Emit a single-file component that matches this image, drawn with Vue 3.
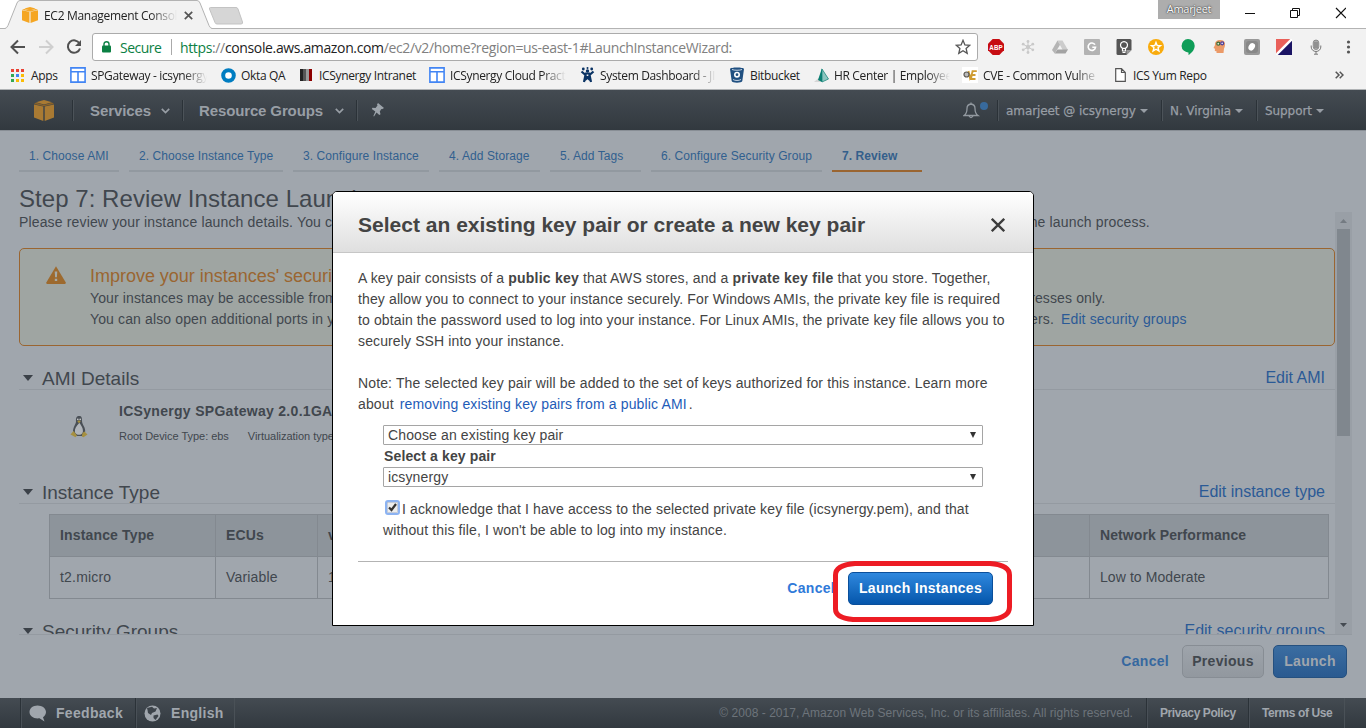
<script setup>
const bookmarks = [
  { icon: 'apps', label: 'Apps' },
  { icon: 'board', label: 'SPGateway - icsynergy', fade: true },
  { icon: 'okta', label: 'Okta QA' },
  { icon: 'bars', label: 'ICSynergy Intranet' },
  { icon: 'board', label: 'ICSynergy Cloud Practice', fade: true },
  { icon: 'jira', label: 'System Dashboard - JIRA', fade: true },
  { icon: 'bucket', label: 'Bitbucket' },
  { icon: 'hr', label: 'HR Center | Employee', fade: true },
  { icon: 'cve', label: 'CVE - Common Vulne', fade: true },
  { icon: 'page', label: 'ICS Yum Repo' },
]
const appColors = ['#ea4335', '#ea4335', '#ea4335', '#34a853', '#4285f4', '#fbbc05', '#34a853', '#fbbc05', '#fbbc05']
const steps = ['1. Choose AMI', '2. Choose Instance Type', '3. Configure Instance', '4. Add Storage', '5. Add Tags', '6. Configure Security Group', '7. Review']
const columns = ['Instance Type', 'ECUs', 'vCPUs', 'Memory (GiB)', 'Instance Storage (GB)', 'EBS-Optimized Available', 'Network Performance']
const values = ['t2.micro', 'Variable', '1', '1', 'EBS only', '-', 'Low to Moderate']
</script>

<template>
  <div class="screen">
    <div class="tabstrip">
      <svg class="tabshape" width="260" height="29" viewBox="0 0 260 29">
        <path d="M0 28.5H5Q7 28 8 25.5L17 3Q18 .5 20 .5H197Q199 .5 200 3L209 25.5Q210 28 212 28.5H260V29H0Z" fill="#f2f2f2" />
        <path d="M0 28.5H5Q7 28 8 25.5L17 3Q18 .5 20 .5H197Q199 .5 200 3L209 25.5Q210 28 212 28.5H260" fill="none" stroke="#b3b3b3" />
        <path d="M210.5 7.5H236Q237.500 7.500 238 9L242.500 22Q243 24 241 24H217Q215.500 24 215 22.500L209.500 9Q209 7.500 210.500 7.500Z" fill="#d6d6d6" stroke="#c3c3c3" />
      </svg>
      <div class="tab">
        <svg width="16" height="16" viewBox="0 0 20 20"><path fill="#f5a623" d="M10 0L17 2 10 4.300 3 2ZM0 4L9.300 6V20L0 16.500ZM20 4L10.700 6V20L20 16.500ZM3 2.500L0 3.500 10 5.500 20 3.500 17 2.500 10 4.500Z" /></svg>
        <span class="tabname fade">EC2 Management Console</span>
        <svg width="9" height="9" viewBox="0 0 9 9"><path d="M.8.8L8.200 8.200M8.200.8L.8 8.200" stroke="#555" stroke-width="1.700" /></svg>
      </div>
      <div class="window">
        <span class="user">Amarjeet</span>
        <svg width="105" height="28" viewBox="0 0 105 28" fill="none" stroke="#111" stroke-width="1">
          <path d="M4 13.500H14M49.500 10.500H56.500V17.500H49.500ZM51.500 10V8.500H58.500V15.500H57" /><path d="M95 8L105 18M105 8L95 18" stroke-width="1.200" />
        </svg>
      </div>
    </div>

    <div class="toolbar">
      <svg class="nav" width="92" height="34" viewBox="0 0 92 34" fill="none" stroke-width="2">
        <path d="M25 18H12M18 11.500L11.500 18L18 24.500" stroke="#505050" />
        <path d="M39 18H52M46 11.500L52.500 18L46 24.500" stroke="#cfcfcf" />
        <path d="M79.500 14.500A6.200 6.200 0 1 0 80 19.500" stroke="#505050" />
        <path d="M81 11V17H75Z" fill="#505050" />
      </svg>
      <div class="address">
        <svg class="lock" width="9" height="12" viewBox="0 0 9 12"><rect y="4.500" width="9" height="7" rx="1" fill="#0b8043" /><path d="M2 5V3a2.500 2.300 0 0 1 5 0V5" fill="none" stroke="#0b8043" stroke-width="1.400" /></svg>
        <span class="secure">Secure</span>
        <span class="sep"></span>
        <span class="url"><span class="scheme">https</span>://<span class="host">console.aws.amazon.com</span>/ec2/v2/home?region=us-east-1#LaunchInstanceWizard:</span>
        <svg width="16" height="16" viewBox="0 0 16 16"><path d="M8 1.300L9.900 5.900 14.800 6.300 11.100 9.500 12.200 14.300 8 11.700 3.800 14.300 4.900 9.500 1.200 6.300 6.100 5.900Z" fill="none" stroke="#555" stroke-width="1.300" /></svg>
      </div>
      <div class="exts">
        <svg viewBox="0 0 16 16"><path d="M4.700 0h6.600L16 4.700v6.600L11.300 16H4.700L0 11.300V4.700Z" fill="#c70d12" /><text x="1.300" y="10.900" font-size="7.500" font-weight="700" fill="#fff" font-family="Liberation Sans, sans-serif" textLength="13.400" lengthAdjust="spacingAndGlyphs">ABP</text></svg>
        <svg viewBox="0 0 16 16" stroke="#c9c9c9" stroke-width="1"><path d="M8 3V13M3.700 5.500L12.300 10.500M12.300 5.500L3.700 10.500" /><g fill="#c9c9c9" stroke="none"><circle cx="8" cy="8" r="2.200" /><circle cx="8" cy="2.500" r="1.400" /><circle cx="8" cy="13.500" r="1.400" /><circle cx="3.200" cy="5.200" r="1.400" /><circle cx="12.800" cy="5.200" r="1.400" /><circle cx="3.200" cy="10.800" r="1.400" /><circle cx="12.800" cy="10.800" r="1.400" /></g></svg>
        <svg viewBox="0 0 16 16"><path d="M5.500 1.500L0 11 2.700 14.500 8.200 5.500Z" fill="#b5b5b5" /><path d="M5.500 1.500H10.500L16 11H10.700Z" fill="#ccc" /><path d="M5.500 10.500H16L13.500 14.500H2.700Z" fill="#a3a3a3" /></svg>
        <svg viewBox="0 0 16 16"><rect width="16" height="16" rx="1" fill="#b3b3b3" /><path d="M11 5.700A3.700 3.700 0 1 0 11.500 8.300H8.300" fill="none" stroke="#fff" stroke-width="1.600" /></svg>
        <svg viewBox="0 0 16 16"><path d="M1 0H14Q15.500 0 15.500 1.500V11L10.500 16H2Q.5 16 .5 14.500V1Z" fill="#555" /><path d="M15.500 11H10.500V16Z" fill="#999" /><path d="M6.500 9.500V12H9.500V9.500M6.700 9.300A3.500 3.500 0 1 1 9.300 9.300ZM6.500 13.500H9.500" fill="none" stroke="#fff" stroke-width="1.200" /></svg>
        <svg viewBox="0 0 16 16"><circle cx="8" cy="8" r="8" fill="#f9ab0c" /><path d="M8 3.500L9.200 6.500 12.500 6.700 10 8.700 10.900 12 8 10.200 5.100 12 6 8.700 3.500 6.700 6.800 6.500Z" fill="#f9ab0c" stroke="#fff" stroke-width="1.400" /></svg>
        <svg viewBox="0 0 16 16"><path d="M8 0A6.700 6.700 0 0 1 14.700 6.700C14.700 11 11 14.500 8.500 16V13.400A6.700 6.700 0 1 1 8 0Z" fill="#0f9d58" /></svg>
        <svg viewBox="0 0 16 16"><path d="M4.500 14V12.300L2.800 12 3 9.800 1.500 9 3 6C2.500 2.500 5.500.8 8.500 1 13.500 1 14 6 12 9.500L11.500 14Z" fill="#eb9a68" /><circle cx="6.300" cy="4.700" r="1.500" fill="#dfe6d8" stroke="#3c6b35" stroke-width="1.200" /><circle cx="10.200" cy="4.300" r="1.500" fill="#d8d4ec" stroke="#4b3d98" stroke-width="1.200" /></svg>
        <svg viewBox="0 0 16 16"><rect width="16" height="16" rx="2" fill="#999" /><rect x="2" y="2" width="12" height="12" rx="3" fill="#888" /><ellipse cx="7.700" cy="8" rx="3" ry="4" fill="#fff" transform="rotate(30 8 8)" /></svg>
        <svg viewBox="0 0 16 16"><path d="M0 0H16L0 16Z" fill="#e9605a" /><path d="M16 0V16H0Z" fill="#1b1464" /><path d="M16 0L0 16" stroke="#fff" stroke-width="2.500" /></svg>
        <svg viewBox="0 0 16 16"><rect x="5.200" y="1" width="5.600" height="9.500" rx="2.800" fill="#aaa" stroke="#777" stroke-width=".7" /><path d="M3.200 6.500V8a4.800 4.500 0 0 0 9.600 0V6.500M8 12.500V15M6 15.200H10M6 4H10M6 6H10M6 8H10" fill="none" stroke="#777" /></svg>
        <svg viewBox="0 0 16 16" fill="#555"><circle cx="8.500" cy="3" r="1.600" /><circle cx="8.500" cy="8" r="1.600" /><circle cx="8.500" cy="13" r="1.600" /></svg>
      </div>
    </div>

    <div class="bookmarks">
      <div v-for="b in bookmarks" :key="b.label" class="bookmark">
        <svg v-if="b.icon === 'apps'" class="bi" width="13" height="13" viewBox="0 0 13 13"><rect v-for="(c, i) in appColors" :key="i" :x="(i % 3) * 5" :y="Math.floor(i / 3) * 5" width="3" height="3" :fill="c" /></svg>
        <svg v-else-if="b.icon === 'board'" class="bi" width="16" height="16" viewBox="0 0 16 16"><path d="M.9.900H15.100V15.100H.9ZM1 4.800H15M8 4.800V15" fill="#fff" stroke="#4285f4" stroke-width="1.600" /></svg>
        <svg v-else-if="b.icon === 'okta'" class="bi" width="15" height="15" viewBox="0 0 15 15"><circle cx="7.500" cy="7.500" r="5.300" fill="#fff" stroke="#007dc1" stroke-width="4" /></svg>
        <svg v-else-if="b.icon === 'bars'" class="bi" width="12" height="12" viewBox="0 0 12 12"><path d="M0 0H3V12H0Z" fill="#222" /><path d="M3 0H6V12H3Z" fill="#555" /><path d="M6 0H9V12H6Z" fill="#999" /><path d="M9 0H12V12H9Z" fill="#8c0000" /></svg>
        <svg v-else-if="b.icon === 'jira'" class="bi" width="15" height="16" viewBox="0 0 15 16"><path d="M1.500 4.500L5.500 8 4 15M13.500 4.500L9.500 8 11 15M5 6.500L10 6.500M5.500 9L10 13M9.500 9L5 13" fill="none" stroke="#0a3364" stroke-width="2.200" /><g fill="#0a3364"><circle cx="7.500" cy="4" r="1.700" /><circle cx="3.300" cy="2" r="1.400" /><circle cx="11.700" cy="2" r="1.400" /><circle cx="7.500" cy="1" r="1" /></g></svg>
        <svg v-else-if="b.icon === 'bucket'" class="bi" width="14" height="16" viewBox="0 0 14 16"><path d="M0 2C0 0 14 0 14 2L12.300 14C12 16.300 2 16.300 1.700 14Z" fill="#205081" /><path d="M2 2.500C4 3.500 10 3.500 12 2.500M3 12.500C5 13.800 9 13.800 11 12.500" fill="none" stroke="#c5d3e2" /><circle cx="7" cy="7.700" r="2.200" fill="#205081" stroke="#fff" stroke-width="1.600" /></svg>
        <svg v-else-if="b.icon === 'hr'" class="bi" width="15" height="15" viewBox="0 0 15 15"><path d="M0 14L7 8V14Z" fill="#d6d6d6" /><path d="M8 0V14L4 12Z" fill="#0a7f72" /><path d="M8 1L14.500 11 8 14Z" fill="#8cc6c0" stroke="#0a7f72" stroke-width=".7" /></svg>
        <svg v-else-if="b.icon === 'cve'" class="bi" width="16" height="16" viewBox="0 0 16 16"><rect width="16" height="16" fill="#fff" /><path d="M14.800 4.200H10.500L9 12H13.500M10 8H13.500M6.500 4L8 11 11 4" fill="none" stroke="#cf9c32" stroke-width="1.800" /><circle cx="4.500" cy="7.500" r="2.500" fill="#bbb" stroke="#5d5a54" stroke-width="1.200" /></svg>
        <svg v-else class="bi" width="11" height="14" viewBox="0 0 11 14"><path d="M.7.700H6.500L10.300 4.500V13.300H.7ZM6.500.7V4.500H10.300" fill="#fff" stroke="#555" stroke-width="1.200" /></svg>
        <span class="bl" :class="{ fade: b.fade }">{{ b.label }}</span>
      </div>
      <svg class="more" width="9" height="8" viewBox="0 0 9 8"><path d="M.7.700L4 4 .7 7.300M4.700.7L8 4 4.700 7.300" fill="none" stroke="#555" stroke-width="1.500" /></svg>
    </div>

    <header class="console">
      <svg class="logo" width="20" height="21" viewBox="0 0 20 21"><path fill="#a97a33" d="M10 0L18 2.300 10 4.600 2 2.300ZM0 4.500L9.300 6.600V21L0 17.500ZM20 4.500L10.700 6.600V21L20 17.500Z" /><path fill="#8a6228" d="M0 4.100L2 2.600 10 4.900 18 2.600 20 4.100 10 6.300Z" /></svg>
      <div class="menu services"><span>Services</span><svg width="9" height="6" viewBox="0 0 9 6"><path d="M.8.800L4.500 4.500 8.200.8" fill="none" stroke="#989ea5" stroke-width="1.700" /></svg></div>
      <div class="menu groups"><span>Resource Groups</span><svg width="9" height="6" viewBox="0 0 9 6"><path d="M.8.800L4.500 4.500 8.200.8" fill="none" stroke="#989ea5" stroke-width="1.700" /></svg></div>
      <div class="menu pin"><svg width="14" height="14" viewBox="0 0 14 14"><path d="M7 0L13 5 11 6.300 10.300 6 8.800 8.500 9.500 11.200 8.300 12 5.500 9.500 3 13.500 2.400 13 4.300 8.600.8 6 1.500 4.800 4.500 5 6.500 2.500 6 1.500Z" fill="#9da4ab" /></svg></div>
      <div class="right">
        <svg class="bell" width="26" height="21" viewBox="0 0 26 21"><path d="M1 15.500Q4 13.500 4 8.500Q4 4.500 8 4Q12 4.500 12 8.500Q12 13.500 15 15.500ZM8 4V2.500M6 16Q8 19 10 16" fill="none" stroke="#9299a0" stroke-width="1.300" /><circle cx="21" cy="6" r="4" fill="#386a9d" /></svg>
        <div class="drop d1"><span>amarjeet @ icsynergy</span><i></i></div>
        <div class="drop d2"><span>N. Virginia</span><i></i></div>
        <div class="drop d3"><span>Support</span><i></i></div>
      </div>
    </header>

    <main>
      <nav class="wizard"><span v-for="(s, i) in steps" :key="s" :class="{ active: i === 6 }">{{ s }}</span></nav>
      <h1>Step 7: Review Instance Launch</h1>
      <div class="scrollarea">
        <div class="content">
          <p class="intro">Please review your instance launch details. You can go back to edit changes for each section. Click Launch to assign a key pair to your instance and complete the launch process.</p>
          <div class="warning">
            <svg width="20" height="18" viewBox="0 0 20 18"><path d="M10 .3L19.800 16.500Q20 18 18.500 18H1.500Q0 18 .3 16.500Z" fill="#9d6a2f" /><path d="M8.700 5.500H11.300L10.900 11.200H9.100ZM8.800 12.700H11.200V15H8.800Z" fill="#a5aaa7" /></svg>
            <div>
              <h2>Improve your instances' security.</h2>
              <p class="w1">Your instances may be accessible from any IP address. We recommend that you update your security group rules to allow access from known IP addresses only.</p>
              <p class="w2"><span>You can also open additional ports in your security group to facilitate access to the application or service you're running, e.g., HTTP (80) for web servers.</span><a>Edit security groups</a></p>
            </div>
          </div>
          <div class="sec s1"><i></i><h3>AMI Details</h3><a>Edit AMI</a></div>
          <div class="ami">
            <svg width="18" height="22" viewBox="0 0 18 22"><path d="M9 0C6 0 5.800 2.500 6 5.500 6 8 3 11 3 15.500L5 20H13L15.200 15.500C15.500 11 12 8.500 12 5 12 2 12 0 9 0Z" fill="#4a5057" /><path d="M8.800 7.500C6.300 10 4.600 12.500 4.900 16 5.600 19.500 11.900 20 12.900 16 13.400 12 11 9.500 9.700 7Z" fill="#b1b5ba" /><path d="M7.300 5.200L9 4.300 10.700 5.200 9 7.200ZM.5 18.500L3.500 15 7 19.500 5.500 21.300ZM17.500 18.500L14.500 15.500 12.500 17 11.800 20.500 13.500 21.200Z" fill="#a69040" /><circle cx="7.800" cy="3.400" r=".8" fill="#ccc" /><circle cx="10.200" cy="3.400" r=".8" fill="#ccc" /></svg>
            <div><b>ICSynergy SPGateway 2.0.1GA</b><p><span>Root Device Type: ebs</span><span>Virtualization type: hvm</span></p></div>
          </div>
          <div class="sec"><i></i><h3>Instance Type</h3><a>Edit instance type</a></div>
          <div class="table">
            <div v-for="c in columns" :key="c" class="th">{{ c }}</div>
            <div v-for="(v, i) in values" :key="i" class="td">{{ v }}</div>
          </div>
          <div class="sec s3"><i></i><h3>Security Groups</h3><a>Edit security groups</a></div>
        </div>
        <div class="scrollbar">
          <svg width="17" height="17" viewBox="0 0 17 17"><path d="M5 11L8.500 7 12 11Z" fill="#747b82" /></svg>
          <div class="thumb"></div>
          <svg width="17" height="17" viewBox="0 0 17 17"><path d="M5 6L8.500 10 12 6Z" fill="#454b52" /></svg>
        </div>
      </div>
      <div class="actions"><a>Cancel</a><button class="prev">Previous</button><button class="launch">Launch</button></div>
    </main>

    <footer>
      <div class="fb"><svg width="18" height="17" viewBox="0 0 18 17"><path d="M8.500.5C13 .5 17 3.300 17 7 17 9.200 15.700 11 14 12.200L15.500 16.500 10.500 13.300C4.500 14 .5 11 .5 7 .5 3.300 4 .5 8.500.5Z" fill="#a0a6ad" /></svg><span>Feedback</span></div>
      <div class="fb en"><svg width="17" height="17" viewBox="0 0 17 17"><circle cx="8.500" cy="8.500" r="8" fill="#a0a6ad" /><path d="M3 3L8 1.800 10 3.500 13 3 11.500 6.500 8 8 7 10 4 8 3.500 5ZM9.500 10.500L13.500 9.500 14.500 11 11.500 15 9.500 13Z" fill="#3c434a" /></svg><span>English</span></div>
      <span class="copy">© 2008 - 2017, Amazon Web Services, Inc. or its affiliates. All rights reserved.</span>
      <b class="pp">Privacy Policy</b>
      <b class="tu">Terms of Use</b>
    </footer>

    <section class="dialog">
      <div class="dhead"><h2>Select an existing key pair or create a new key pair</h2><svg width="14" height="14" viewBox="0 0 14 14"><path d="M.8.800L13.200 13.200M13.200.8L.8 13.200" stroke="#3c3c3c" stroke-width="2.300" /></svg></div>
      <div class="dbody">
        <p>A key pair consists of a <b>public key</b> that AWS stores, and a <b>private key file</b> that you store. Together,<br>they allow you to connect to your instance securely. For Windows AMIs, the private key file is required<br>to obtain the password used to log into your instance. For Linux AMIs, the private key file allows you to<br>securely SSH into your instance.</p>
        <p class="note">Note: The selected key pair will be added to the set of keys authorized for this instance. Learn more<br>about <a>removing existing key pairs from a public AMI</a>.</p>
        <div class="form">
          <div class="select"><span>Choose an existing key pair</span><i></i></div>
          <label>Select a key pair</label>
          <div class="select"><span>icsynergy</span><i></i></div>
          <p class="ack"><svg width="15" height="15" viewBox="0 0 15 15"><rect x="1" y="1" width="13" height="13" rx="2" fill="#e8e8e8" stroke="#8cb3f2" stroke-width="2" /><rect x="2.500" y="2.500" width="10" height="10" fill="#ededed" stroke="#aab8cf" stroke-width=".6" /><path d="M4 7.500L6.500 10L11 4" fill="none" stroke="#333" stroke-width="2.200" /></svg>I acknowledge that I have access to the selected private key file (icsynergy.pem), and that<br>without this file, I won't be able to log into my instance.</p>
        </div>
        <div class="dfoot"><a>Cancel</a><button class="launch go">Launch Instances</button></div>
      </div>
      <svg class="mark" width="180" height="62" viewBox="0 0 180 62"><path d="M22 2.500H157Q176.500 4 176.500 14V46Q176.500 57 157 58.500H20Q2.500 57 2.500 48V14Q2.500 4 22 2.500Z" fill="none" stroke="#ed1c24" stroke-width="5" /></svg>
    </section>
  </div>
</template>

<style>
html, body { margin: 0; overflow: hidden; }
</style>
<style scoped>
* { box-sizing: border-box; }
h1, h2, h3, p { margin: 0; font-weight: 400; }
svg { flex: none; display: block; }
.screen { position: relative; width: 1366px; height: 728px; overflow: hidden; display: flex; flex-direction: column; background: #a0a6ad; font-family: "Liberation Sans", Arial, sans-serif; font-size: 14px; letter-spacing: .125px; color: #41474e; white-space: nowrap; }
.fade { overflow: hidden; -webkit-mask-image: linear-gradient(90deg, #000 80%, transparent); mask-image: linear-gradient(90deg, #000 80%, transparent); }

.tabstrip { position: relative; flex: none; height: 29px; background: #fff; border-bottom: 1px solid #b3b3b3; display: flex; justify-content: space-between; font-family: "Open Sans", sans-serif; font-size: 12px; letter-spacing: -.3px; color: #222; }
.tabshape { position: absolute; left: 0; top: 0; }
.tab { position: relative; display: flex; align-items: center; height: 28px; padding: 2px 0 0 22px; }
.tabname { width: 133px; margin: 0 7px 0 6px; }
.window { display: flex; padding-right: 20px; }
.user { width: 62px; height: 19px; margin-right: 21px; background: #adadad; color: #fff; text-shadow: 0 0 2px #333, 0 0 1px #333; font-size: 11px; line-height: 18px; text-align: center; }

.toolbar { flex: none; height: 34px; background: #f2f2f2; display: flex; }
.address { flex: none; width: 886px; height: 28px; margin-top: 4px; background: #fff; border: 1px solid #ababab; border-radius: 3px; display: flex; align-items: center; padding: 0 6px 0 9px; font-family: "Open Sans", sans-serif; font-size: 14px; letter-spacing: -.36px; color: #808080; }
.secure { color: #0b8043; margin-left: 9px; width: 42px; letter-spacing: -.5px; }
.sep { width: 1px; height: 16px; background: #aaa; margin: 0 8px 0 9px; }
.url { flex: 1; }
.scheme { color: #0b8043; }
.host { color: #222; }
.exts { display: grid; grid-template-columns: repeat(12, 32px); padding: 10px 0 0 10px; }
.exts svg { width: 16px; height: 16px; }

.bookmarks { flex: none; height: 27px; background: #f2f2f2; border-bottom: 1px solid #b0b3b5; display: grid; grid-template-columns: 59px 151px 79px 129px 151px 150px 84px 148px 153px 220px 9px; padding: 0 0 2px 11px; align-items: center; font-family: "Open Sans", sans-serif; font-size: 12px; letter-spacing: -.34px; color: #222; }
.bookmark { display: flex; align-items: center; }
.bl { width: 116px; margin-left: 5px; }
.bookmark:nth-child(1) .bl, .bookmark:nth-child(4) .bl, .bookmark:nth-child(10) .bl { margin-left: 7px; }
.bookmark:nth-child(7) .bl { margin-left: 6px; }

.console { flex: none; height: 41px; background: linear-gradient(#444b52, #32393f); border-bottom: 1px solid #888e95; display: flex; align-items: center; color: #989ea5; }
.logo { margin: 0 18px 0 34px; }
.menu { height: 21px; border-left: 1px solid #2b3238; box-shadow: inset 1px 0 #4c5359; display: flex; align-items: center; padding-left: 17px; font-weight: 700; font-size: 15px; letter-spacing: -.13px; }
.menu svg { margin-left: 10px; margin-top: 2px; }
.services { width: 110px; }
.services span { letter-spacing: -.1px; }
.groups { width: 174px; padding-left: 16px; }
.groups svg { margin-left: 12px; }
.pin { width: 40px; padding-left: 14px; }
.pin svg { margin: 0; }
.right { margin-left: auto; display: flex; align-items: center; font-family: "DejaVu Sans", sans-serif; font-size: 12px; letter-spacing: -.08px; }
.bell { margin-right: 8px; }
.drop { height: 21px; border-left: 1px solid #2b3238; box-shadow: inset 1px 0 #4c5359; display: flex; align-items: center; padding-left: 8px; -webkit-text-stroke: .25px #989ea5; }
.drop span { padding-top: 1px; }
.drop i { border: 4px solid transparent; border-top: 4px solid #989ea5; border-bottom: 0; margin: 2px 0 0 4px; }
.d1 { width: 164px; } .d2 { width: 95px; } .d3 { width: 110px; }

main { flex: 1; min-height: 0; padding-left: 19px; display: flex; flex-direction: column; }
.wizard { flex: none; display: flex; gap: 10px; height: 41px; font-size: 12px; letter-spacing: .08px; color: #31608f; line-height: 14px; padding-top: 18px; }
.wizard span { width: 100px; height: 23px; padding-left: 10px; border-bottom: 2px solid #9299a0; }
.wizard span:nth-child(2) { width: 154px; }
.wizard span:nth-child(3) { width: 136px; }
.wizard span:nth-child(4) { width: 101px; }
.wizard span:nth-child(5) { width: 91px; }
.wizard span:nth-child(6) { width: 171px; }
.wizard span.active { width: 90px; font-weight: 700; color: #345f8b; border-color: #9a6531; }
h1 { flex: none; height: 40px; padding-top: 12px; font-size: 24px; line-height: 30px; letter-spacing: .05px; }
.scrollarea { flex: none; position: relative; height: 423px; width: 1333px; border-bottom: 1px solid #949aa1; display: flex; overflow: hidden; }
.content { width: 1316px; height: 422px; overflow: hidden; }
.intro { height: 36px; line-height: 20px; letter-spacing: .15px; }
.warning { height: 98px; border: 1px solid #9a6531; border-radius: 5px; background: #9fa5a2; display: flex; overflow: hidden; }
.warning svg { margin: 17px 24px 0 26px; }
.warning h2 { font-size: 18px; letter-spacing: -.02px; line-height: 22px; color: #9a6531; padding-top: 16px; height: 39px; }
.warning p { line-height: 21px; }
.w2 { display: flex; letter-spacing: .13px; }
.w2 span { width: 971px; }
a { color: #2b5a96; }
.sec { display: flex; align-items: center; height: 25px; border-bottom: 1px solid #949aa1; }
.sec i { border: 5.500px solid transparent; border-top: 6px solid #3b4148; border-bottom: 0; margin: 2px 9px 0 4px; }
.sec h3 { font-size: 19px; letter-spacing: 0; flex: 1; padding-top: 3px; line-height: 21px; }
.sec a { font-size: 16px; letter-spacing: 0; margin-right: 10px; padding-top: 2px; }
.s1 { margin-top: 19px; }
.ami { display: flex; height: 89px; padding: 26px 0 0 51px; }
.ami div { margin: -14px 0 0 31px; }
.ami b { display: block; line-height: 18px; letter-spacing: .3px; }
.ami p { font-size: 11px; line-height: 14px; margin-top: 9px; letter-spacing: -.03px; display: flex; gap: 19px; }
.table { width: 1280px; height: 85px; margin: 10px 0 0 30px; border: 1px solid #838990; display: grid; grid-template-columns: 166px 102px 120px 170px 220px 262px 238px; grid-template-rows: 42px 41px; }
.th { background: #8d949b; font-weight: 700; border-right: 1px solid #838990; border-bottom: 1px solid #838990; padding: 12px 0 0 10px; line-height: 16px; letter-spacing: .15px; }
.th:last-of-type { letter-spacing: .07px; }
.td { padding: 12px 0 0 10px; line-height: 16px; border-right: 1px solid #838990; letter-spacing: .19px; }
.th:nth-child(7n), .td:nth-child(7n) { border-right: 0; letter-spacing: .08px; }
.s3 { margin-top: 19px; }
.scrollbar { width: 17px; background: #999fa6; display: flex; flex-direction: column; }
.thumb { width: 13px; height: 207px; margin: 0 2px 181px; background: #80878e; flex: none; }
.actions { display: flex; align-items: center; justify-content: flex-end; padding: 10px 19px 0 0; font-weight: 700; letter-spacing: .3px; }
.actions a { color: #36689f; margin: -2px 13px 0 0; }
button { font: 700 14px "Liberation Sans", Arial, sans-serif; letter-spacing: .3px; height: 33px; border-radius: 5px; padding: 0 0 2px; white-space: nowrap; }
.prev { width: 82px; color: #41474e; border: 1px solid #878d94; background: linear-gradient(#9ea4ab, #92989f); margin-right: 9px; }
.launch { width: 74px; color: #a0a6ad; border: 1px solid #25507f; background: linear-gradient(#3b6da1, #2a5a90); }

footer { flex: none; height: 30px; background: linear-gradient(#444b52, #32393f); display: flex; align-items: center; color: #a0a6ad; padding-left: 20px; }
footer > * { height: 30px; line-height: 30px; }
footer > div, footer > b { border-left: 1px solid #2b3238; box-shadow: inset 1px 0 #495057; }
.fb { width: 115px; padding-left: 8px; display: flex; align-items: center; font-weight: 700; letter-spacing: .3px; }
.fb svg { margin-right: 9px; }
.en { width: 100px; border-right: 1px solid #4a5157; }
.en svg { margin-right: 10px; }
.copy { margin-left: auto; margin-right: 13px; font-size: 12px; letter-spacing: .03px; color: #6d747b; }
.pp, .tu { font-size: 12px; letter-spacing: -.4px; padding-left: 13px; }
.pp { width: 102px; } .tu { width: 97px; border-right: 1px solid #4a5157; margin-right: 21px; }

.dialog { position: absolute; left: 332px; top: 191px; width: 702px; height: 435px; background: #fff; border: 1px solid #000; border-radius: 5px 5px 0 0; color: #444; }
.dhead { height: 61px; border-bottom: 1px solid #c6c6c6; background: linear-gradient(#fff, #dfdfdf); border-radius: 4px 4px 0 0; display: flex; align-items: center; justify-content: space-between; padding: 5px 28px 0 25px; }
.dhead h2 { font-size: 21px; font-weight: 700; letter-spacing: .01px; }
.dbody { padding: 15px 25px 0; line-height: 21px; }
.dbody b { letter-spacing: .23px; }
.note { margin-top: 21px; letter-spacing: .135px; }
.dialog a { color: #1e5cb8; }
.note a { margin: 0 2px; }
.form { padding: 10px 25px 0; }
.select { width: 600px; height: 20px; border: 1px solid #a5a5a5; border-radius: 1px; padding: 0 6px 0 4px; display: flex; align-items: center; justify-content: space-between; line-height: 18px; }
.select i { border: 3.500px solid transparent; border-top: 6px solid #333; border-bottom: 0; }
label { display: block; height: 22px; line-height: 22px; padding-left: 1px; font-weight: 700; letter-spacing: .13px; }
.ack { margin-top: 12px; }
.ack svg { display: inline-block; vertical-align: -1px; margin: 0 2px 0 2px; }
.dfoot { margin-top: 20px; border-top: 1px solid #b3b3b3; display: flex; justify-content: flex-end; align-items: center; padding: 10px 15px 0 0; }
.dfoot a { color: #2f7ad9; font-weight: 700; letter-spacing: .3px; margin-right: 13px; }
.go { width: 145px; color: #fff; border-color: #0a4f9b; background: linear-gradient(#2f88de, #0556ab); }
.mark { position: absolute; left: 500px; top: 369px; }
</style>
